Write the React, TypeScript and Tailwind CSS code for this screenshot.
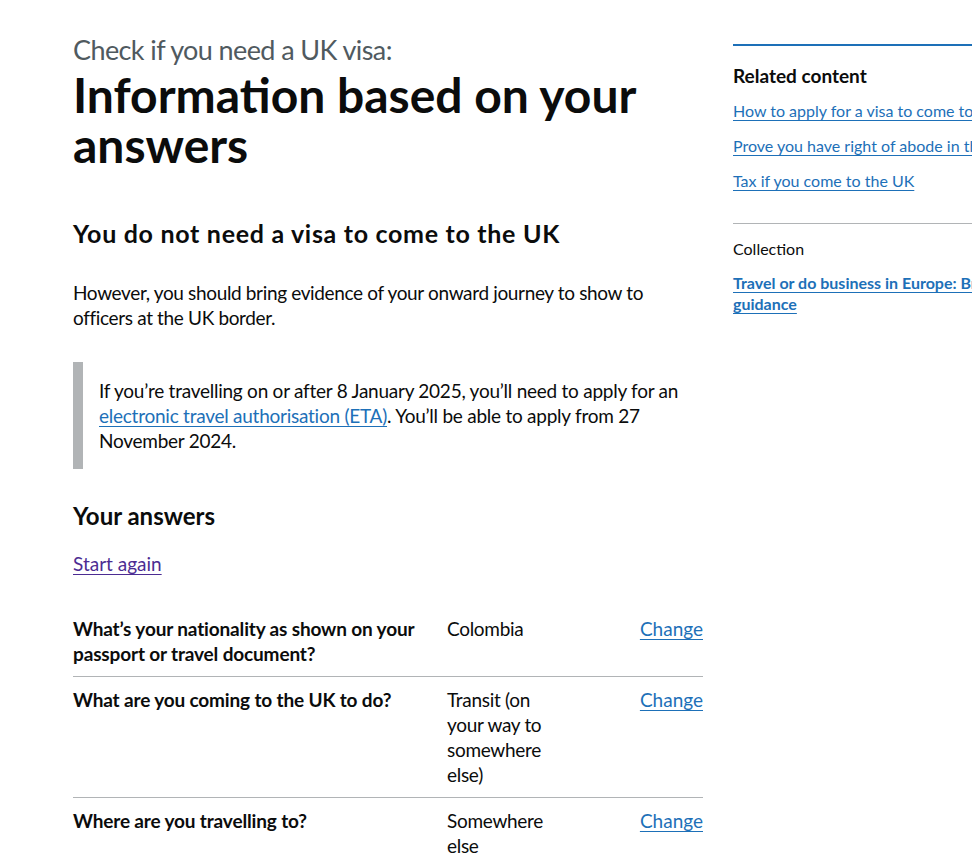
const answers = [
  {
    question: "What’s your nationality as shown on your passport or travel document?",
    answer: "Colombia",
  },
  {
    question: "What are you coming to the UK to do?",
    answer: "Transit (on your way to somewhere else)",
  },
  {
    question: "Where are you travelling to?",
    answer: "Somewhere else",
  },
];

const relatedLinks = [
  "How to apply for a visa to come to the UK",
  "Prove you have right of abode in the UK",
  "Tax if you come to the UK",
];

function SummaryRow({ question, answer }: { question: string; answer: string }) {
  return (
    <div className="grid grid-cols-[374px_126px_1fr] border-b border-[#b1b4b6] pt-[10px] pb-[10px] text-[19px] leading-[25px]">
      <dt className="pr-5 font-bold tracking-[-0.15px]">{question}</dt>
      <dd className="pr-5 tracking-[-0.3px]">{answer}</dd>
      <dd className="text-right">
        <a href="#" className="text-[#1d70b8] underline underline-offset-[3px] decoration-1">
          Change
        </a>
      </dd>
    </div>
  );
}

export default function App() {
  return (
    <div className="min-h-screen w-[972px] overflow-hidden bg-white text-[#0b0c0c] font-['Lato',sans-serif]">
      <div className="flex w-[1200px] gap-[30px] pl-[73px]">
        <main className="w-[630px] shrink-0 pt-[35px] pb-10">
          <span className="mb-[5px] block text-[27px] leading-[30px] tracking-[-0.6px] text-[#505a5f]">
            Check if you need a UK visa:
          </span>
          <h1 className="text-[48px] leading-[50px] font-bold">Information based on your answers</h1>

          <h2 className="mt-[48px] text-[25px] leading-[30px] font-bold tracking-[0.7px]">
            You do not need a visa to come to the UK
          </h2>
          <p className="mt-[32px] text-[19px] leading-[25px] tracking-[-0.35px]">
            However, you should bring evidence of your onward journey to show to officers at the UK border.
          </p>

          <div className="mt-[32px] border-l-[10px] border-[#b1b4b6] py-4 pl-[16px] text-[19px] leading-[25px] tracking-[-0.25px]">
            If you’re travelling on or after 8 January 2025, you’ll need to apply for an{" "}
            <a href="#" className="text-[#1d70b8] underline underline-offset-[3px] decoration-1">
              electronic travel authorisation (ETA)
            </a>
            . You’ll be able to apply from 27 November 2024.
          </div>

          <h2 className="mt-[32px] text-[24px] leading-[30px] font-bold">Your answers</h2>
          <p className="mt-[20px] text-[19px] leading-[25px]">
            <a href="#" className="text-[#4c2c92] underline underline-offset-[3px] decoration-1">
              Start again
            </a>
          </p>

          <dl className="mt-[30px]">
            {answers.map((row) => (
              <SummaryRow key={row.question} {...row} />
            ))}
          </dl>
        </main>

        <aside className="w-[290px] shrink-0 pt-[44px]">
          <div className="border-t-2 border-[#1d70b8] pt-[15px]">
            <h2 className="text-[19px] leading-[30px] font-bold">Related content</h2>
            <ul className="mt-[10px] space-y-[15px] text-[16px] leading-[20px]">
              {relatedLinks.map((link) => (
                <li key={link} className="whitespace-nowrap">
                  <a href="#" className="text-[#1d70b8] underline underline-offset-[3px] decoration-1">
                    {link}
                  </a>
                </li>
              ))}
            </ul>
          </div>
          <div className="mt-[32px] border-t border-[#b1b4b6] pt-[15px]">
            <h3 className="text-[16px] leading-[20px]">Collection</h3>
            <a
              href="#"
              className="mt-[13px] block text-[16px] leading-[21px] font-bold text-[#1d70b8] underline underline-offset-[3px] decoration-1"
            >
              Travel or do business in Europe: Brexit guidance
            </a>
          </div>
        </aside>
      </div>
    </div>
  );
}
